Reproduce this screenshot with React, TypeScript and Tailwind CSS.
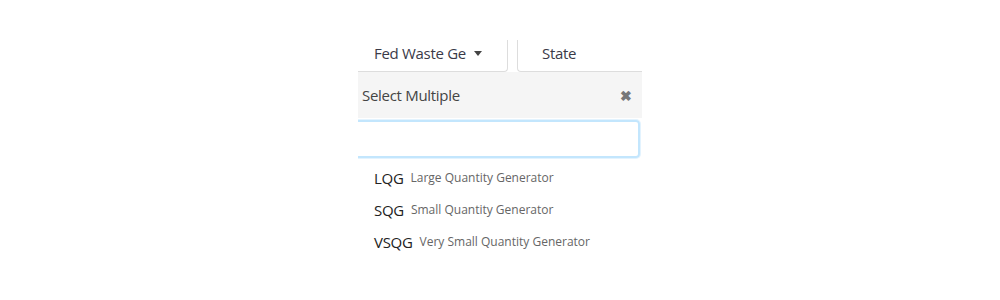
const OPTIONS = [
  { code: "LQG", label: "Large Quantity Generator" },
  { code: "SQG", label: "Small Quantity Generator" },
  { code: "VSQG", label: "Very Small Quantity Generator" },
];

export default function App() {
  return (
    <div
      className="h-[300px] w-[1000px] bg-white"
      style={{ fontFamily: '"Open Sans", "Noto Sans", sans-serif' }}
    >
      <div className="ml-[358px] w-[284px] overflow-hidden pt-[40px]">
        {/* tabs */}
        <div className="flex h-[32px] items-stretch">
          <div className="flex w-[150px] items-center rounded-br-[4px] border-r border-b border-[#dddddd] pl-[16px] text-[15px] text-[#3a3a48]">
            <span className="mb-[5px] tracking-[-0.3px]">Fed Waste Ge</span>
            <span className="mb-[5px] ml-[8px] h-0 w-0 border-x-[4.5px] border-t-[5px] border-x-transparent border-t-[#444]" />
          </div>
          <div className="ml-[9px] flex flex-1 items-center rounded-bl-[4px] border-b border-l border-[#dddddd] pl-[24px] text-[15px] text-[#3a3a48]">
            <span className="mb-[5px] tracking-[-0.3px]">State</span>
          </div>
        </div>

        {/* header */}
        <div className="flex h-[46px] items-center justify-between bg-[#f5f5f5] pr-[10px] pl-[4px] text-[15px] text-[#444]">
          <span className="tracking-[-0.3px]">Select Multiple</span>
          <span className="text-[14px] font-bold text-[#777]">✖</span>
        </div>

        {/* search input */}
        <div className="-ml-[10px] mt-[2px] mr-[2px] h-[38px] rounded-[4px] border-2 border-[#c3e6fd] shadow-[0_0_0_1px_#e3f3fe]" />

        {/* options */}
        <ul className="mt-[4px] pl-[16px]">
          {OPTIONS.map((o) => (
            <li key={o.code} className="flex h-[32px] items-center">
              <span className="text-[15px] tracking-[-0.3px] text-[#222]">{o.code}</span>
              <span className="ml-[7px] text-[12px] text-[#666]">{o.label}</span>
            </li>
          ))}
        </ul>
      </div>
    </div>
  );
}
